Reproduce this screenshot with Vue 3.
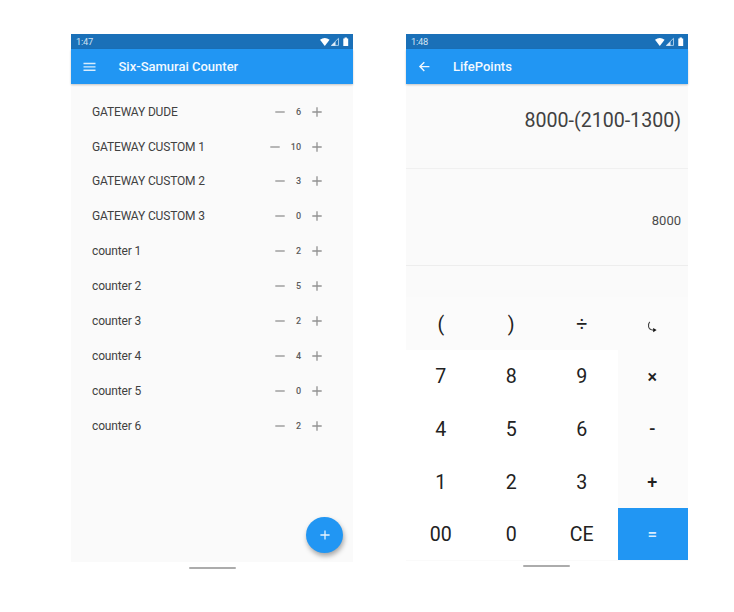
<script setup>
const counters = [
  { name: 'GATEWAY DUDE', value: 6 },
  { name: 'GATEWAY CUSTOM 1', value: 10 },
  { name: 'GATEWAY CUSTOM 2', value: 3 },
  { name: 'GATEWAY CUSTOM 3', value: 0 },
  { name: 'counter 1', value: 2 },
  { name: 'counter 2', value: 5 },
  { name: 'counter 3', value: 2 },
  { name: 'counter 4', value: 4 },
  { name: 'counter 5', value: 0 },
  { name: 'counter 6', value: 2 },
]
const keys = [
  '(', ')', '÷', 'swap',
  '7', '8', '9', '×',
  '4', '5', '6', '-',
  '1', '2', '3', '+',
  '00', '0', 'CE', '=',
]
function keyClass(key, i) {
  return {
    light: i < 4 || i % 4 === 3,
    operator: i % 4 === 3,
    equals: key === '=',
  }
}
</script>

<template>
  <main class="stage">
    <section class="phone">
      <div class="screen">
        <header class="status">
          <span>1:47</span>
          <svg class="signals" width="29" height="10" viewBox="0 0 29 10">
            <path d="M0 2.7Q4.8-.9 9.6 2.7L4.8 9Z" fill="#fff" />
            <path d="M18.5 1.3V8.4H11.4Z" fill="none" stroke="#a3c8e6" stroke-width="1" />
            <path d="M15.5 4.6V8.8H11Z" fill="#e4eff8" />
            <path d="M23.3 1.5H24.6V.6H26.9V1.5H28.2V9H23.3Z" fill="#fff" />
          </svg>
        </header>
        <div class="appbar">
          <svg class="nav" width="13" height="10" viewBox="0 0 13 10">
            <path d="M.5 1.5H12.5M.5 4.9H12.5M.5 8.3H12.5" fill="none" stroke="#d9edfd" stroke-width="1.4" />
          </svg>
          <h1>Six-Samurai Counter</h1>
        </div>
        <ul class="list">
          <li v-for="c in counters" :key="c.name">
            <span class="name">{{ c.name }}</span>
            <svg class="step" width="10" height="10" viewBox="0 0 10 10"><path d="M.3 5H9.7" /></svg>
            <span class="value">{{ c.value }}</span>
            <svg class="step" width="10" height="10" viewBox="0 0 10 10"><path d="M.3 5H9.7M5 .3V9.7" /></svg>
          </li>
        </ul>
        <button class="fab" aria-label="Add">
          <svg width="10" height="10" viewBox="0 0 10 10"><path d="M.4 5H9.6M5 .4V9.6" fill="none" stroke="#e6f3fe" stroke-width="1.3" /></svg>
        </button>
      </div>
      <div class="handle"></div>
    </section>

    <section class="phone calc">
      <div class="screen">
        <header class="status">
          <span>1:48</span>
          <svg class="signals" width="29" height="10" viewBox="0 0 29 10">
            <path d="M0 2.7Q4.8-.9 9.6 2.7L4.8 9Z" fill="#fff" />
            <path d="M18.5 1.3V8.4H11.4Z" fill="none" stroke="#a3c8e6" stroke-width="1" />
            <path d="M15.5 4.6V8.8H11Z" fill="#e4eff8" />
            <path d="M23.3 1.5H24.6V.6H26.9V1.5H28.2V9H23.3Z" fill="#fff" />
          </svg>
        </header>
        <div class="appbar">
          <svg class="nav" width="13" height="12" viewBox="0 0 13 12">
            <path d="M11.4 5.6H2.2M6.3 1.2L1.9 5.6L6.3 10" fill="none" stroke="#f0f8ff" stroke-width="1.4" />
          </svg>
          <h1>LifePoints</h1>
        </div>
        <div class="expression">8000-(2100-1300)</div>
        <div class="result">8000</div>
        <div class="spacer"></div>
        <div class="keypad">
          <div v-for="(key, i) in keys" :key="key" class="key" :class="keyClass(key, i)">
            <svg v-if="key === 'swap'" class="swap" width="10" height="12" viewBox="0 0 10 12">
              <path d="M2.8 .8C.3 3.4 .8 8.8 6.5 9.1" fill="none" stroke="#444" stroke-width="1.1" />
              <path d="M6.2 6.9L9.6 9.1L6.2 11.3Z" fill="#111" />
            </svg>
            <span v-else>{{ key }}</span>
          </div>
        </div>
      </div>
      <div class="handle"></div>
    </section>
  </main>
</template>

<style>
body { background: #fff; }
</style>

<style scoped>
.stage {
  box-sizing: border-box;
  width: 734px;
  height: 612px;
  padding: 34px 46px 0 71px;
  display: flex;
  justify-content: space-between;
  background: #fff;
  font-family: Roboto, "Liberation Sans", sans-serif;
  overflow: hidden;
}
.phone { width: 282px; }
.screen {
  position: relative;
  height: 528px;
  display: flex;
  flex-direction: column;
  background: #fafafa;
}
.status {
  height: 15px;
  flex: none;
  padding: 0 4px 0 5px;
  display: flex;
  align-items: center;
  justify-content: space-between;
  background: #1a70b8;
  color: #d3e4f2;
  font-size: 9.3px;
  line-height: 15px;
}
.status span { letter-spacing: -0.25px; }
.appbar {
  height: 35px;
  flex: none;
  padding-left: 12px;
  display: flex;
  align-items: center;
  background: #2196f3;
  box-shadow: 0 1px 2px rgba(0, 0, 0, 0.22);
  z-index: 1;
}
.nav { flex: none; }
h1 {
  margin: 0 0 0 22.5px;
  color: #f2f9ff;
  font-size: 13px;
  line-height: 16px;
  font-weight: 500;
}
.list {
  margin: 0;
  padding: 10.2px 31px 0 21px;
  list-style: none;
}
.list li {
  height: 34.9px;
  display: flex;
  align-items: center;
}
.name {
  flex: 1;
  color: #414141;
  font-size: 12px;
  letter-spacing: -0.15px;
}
.value {
  margin: 0 11px 0 10.5px;
  color: #5c5c5c;
  font-size: 9px;
  font-weight: 500;
}
.step path { fill: none; stroke: #929292; stroke-width: 1.3; }
.fab {
  position: absolute;
  right: 10px;
  bottom: 9px;
  width: 37px;
  height: 36px;
  padding: 0;
  border: 0;
  border-radius: 50%;
  display: flex;
  align-items: center;
  justify-content: center;
  background: #2196f3;
  box-shadow: 1px 3px 5px rgba(0, 0, 0, 0.34);
}
.handle {
  width: 47px;
  height: 2px;
  margin: 4.6px auto 0;
  border-radius: 1px;
  background: #acacac;
}
.calc { width: 282px; }
.calc .screen { height: 526.5px; }
.calc h1 { margin-left: 22px; }
.expression {
  box-sizing: border-box;
  height: 85px;
  flex: none;
  padding: 25px 7px 0 0;
  border-bottom: 1px solid #f0f0f0;
  color: #414141;
  text-align: right;
  font-size: 19.6px;
  line-height: 23px;
}
.result {
  box-sizing: border-box;
  height: 97px;
  flex: none;
  padding-right: 7px;
  border-bottom: 1px solid #ededed;
  color: #4a4a4a;
  text-align: right;
  font-size: 13px;
  line-height: 103px;
}
.spacer { flex: 1; }
.keypad {
  height: 263.3px;
  display: grid;
  grid-template-columns: repeat(4, 1fr);
  grid-template-rows: repeat(5, 1fr);
}
.key {
  display: flex;
  align-items: center;
  justify-content: center;
  padding: 1.4px 1px 0 0;
  background: #fff;
  color: #222;
  font-size: 19.6px;
}
.key.light { background: #fbfbfb; }
.key.operator { padding-top: 0; font-size: 18px; font-weight: 500; }
.key.equals { background: #2196f3; color: #d8edff; font-size: 17px; }
.swap { margin-top: 6px; }
.calc .handle { margin-left: 117px; margin-top: 4.3px; }
</style>
